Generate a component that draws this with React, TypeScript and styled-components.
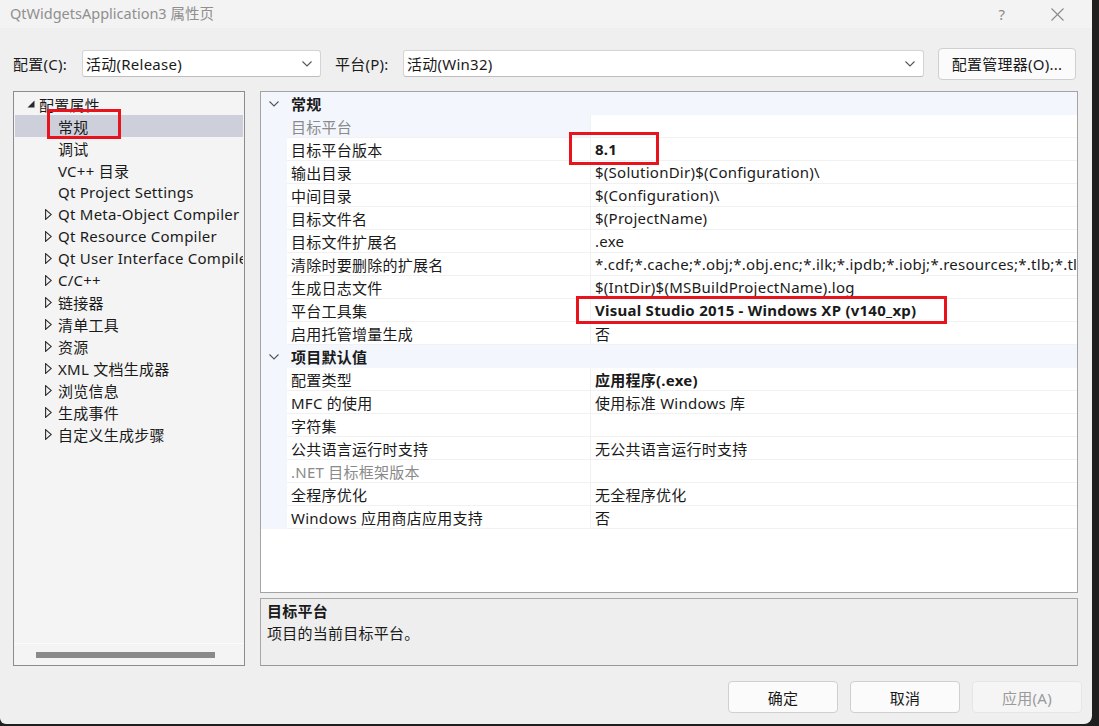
import React from "react";
import styled, { createGlobalStyle, css } from "styled-components";

const GlobalStyle = createGlobalStyle`
  html, body {
    margin: 0;
    padding: 0;
    background: #1f1f1f;
  }
  body {
    font-family: "Noto Sans", "Noto Sans CJK SC", sans-serif;
    font-size: 15px;
    letter-spacing: 0.25px;
    color: #1a1a1a;
  }
`;

const Window = styled.div`
  position: relative;
  width: 1092px;
  height: 724px;
  background: #efefef;
  border-bottom-right-radius: 8px;
  border-bottom-left-radius: 6px;
  display: flex;
  flex-direction: column;
  overflow: hidden;
`;

const TitleBar = styled.div`
  height: 28px;
  display: flex;
  align-items: center;
  padding-left: 10px;
  background: #f3f3f3;
`;

const Title = styled.div`
  flex: 1;
  color: #8f8f8f;
  font-size: 14.5px;
  letter-spacing: 0;
  padding-bottom: 4px;
`;

const TitleButton = styled.div<{ $w: number }>`
  width: ${({ $w }) => $w}px;
  height: 28px;
  display: flex;
  align-items: center;
  justify-content: center;
  color: #8a8a8a;
  font-size: 15px;
`;

const Toolbar = styled.div`
  display: flex;
  align-items: center;
  height: 31px;
  margin-top: 20px;
  padding-left: 13px;
`;

const Label = styled.span<{ $w: number }>`
  width: ${({ $w }) => $w}px;
  white-space: nowrap;
`;

const Select = styled.div<{ $w: number }>`
  width: ${({ $w }) => $w}px;
  height: 27px;
  box-sizing: border-box;
  background: #fff;
  border: 1px solid #d4d4d4;
  border-bottom-color: #bdbdbd;
  border-radius: 3px;
  display: flex;
  align-items: center;
  padding: 0 8px 0 3px;
  margin-right: 14px;
`;

const SelectText = styled.span`
  flex: 1;
`;

const PushButton = styled.button<{ $w: number; $disabled?: boolean }>`
  width: ${({ $w }) => $w}px;
  height: 32px;
  box-sizing: border-box;
  background: #fbfbfb;
  border: 1px solid #cfcfcf;
  border-radius: 4px;
  font-family: inherit;
  font-size: 15px;
  letter-spacing: 0.25px;
  color: #1a1a1a;
  padding: 0;
  ${({ $disabled }) =>
    $disabled &&
    css`
      background: #f5f5f5;
      border-color: #e6e6e6;
      color: #9a9a9a;
    `}
`;

const Main = styled.div`
  display: flex;
  gap: 15px;
  margin-top: 12px;
  padding-left: 13px;
  height: 575px;
`;

const TreePanel = styled.div`
  width: 232px;
  box-sizing: border-box;
  border: 1px solid #8c8c8c;
  background: #f4f4f4;
  display: flex;
  flex-direction: column;
`;

const TreeList = styled.div`
  flex: 1;
  padding-top: 1px;
  overflow: hidden;
`;

const TreeRow = styled.div<{ $selected?: boolean }>`
  height: 22px;
  display: flex;
  align-items: center;
  white-space: nowrap;
  overflow: hidden;
  margin: 0 1px;
  background: ${({ $selected }) => ($selected ? "#cdcfdb" : "transparent")};
`;

const Twisty = styled.span<{ $indent: number }>`
  flex: none;
  width: 14px;
  margin-left: ${({ $indent }) => $indent}px;
  display: flex;
  align-items: center;
  justify-content: center;
`;

const TreeLabel = styled.span<{ $top?: boolean }>`
  flex: none;
  margin-left: ${({ $top }) => ($top ? 1 : 3)}px;
`;

const HScroll = styled.div`
  height: 21px;
  border-top: 1px solid #fbfbfb;
  display: flex;
  align-items: center;
  padding-left: 22px;
`;

const HThumb = styled.div`
  width: 179px;
  height: 6px;
  background: #8a8a8a;
`;

const RightCol = styled.div`
  width: 818px;
  display: flex;
  flex-direction: column;
  gap: 5px;
`;

const Grid = styled.div`
  height: 502px;
  box-sizing: border-box;
  border: 1px solid #a3a3a3;
  background: #fff;
  overflow: hidden;
`;

const GridRow = styled.div<{ $header?: boolean }>`
  height: 23px;
  display: flex;
  white-space: nowrap;
  ${({ $header }) =>
    $header &&
    css`
      background: #f3f6fc;
      font-weight: 700;
    `}
`;

const Gutter = styled.div`
  width: 26px;
  flex: none;
  background: #f3f6fc;
  display: flex;
  align-items: center;
  justify-content: center;
`;

const NameCell = styled.div<{ $dim?: boolean; $current?: boolean }>`
  width: 303px;
  flex: none;
  box-sizing: border-box;
  padding-left: 4px;
  display: flex;
  align-items: center;
  border-bottom: 1px solid #f1f1f1;
  color: ${({ $dim }) => ($dim ? "#8a8a8a" : "#1a1a1a")};
  background: ${({ $current }) => ($current ? "#f3f6fc" : "#fff")};
`;

const ValueCell = styled.div<{ $bold?: boolean }>`
  flex: 1;
  min-width: 0;
  box-sizing: border-box;
  padding-left: 4px;
  display: flex;
  align-items: center;
  overflow: hidden;
  border-left: 1px solid #f1f1f1;
  border-bottom: 1px solid #f1f1f1;
  font-weight: ${({ $bold }) => ($bold ? 700 : 400)};
`;

const HeaderText = styled.div`
  padding-left: 4px;
  display: flex;
  align-items: center;
`;

const Description = styled.div`
  height: 68px;
  box-sizing: border-box;
  border: 1px solid #a8a8a8;
  border-bottom-color: #9a9a9a;
  background: #eeeeee;
  padding: 1px 6px;
  display: flex;
  flex-direction: column;
`;

const DescTitle = styled.div`
  font-weight: 700;
  height: 22px;
  line-height: 22px;
`;

const DescText = styled.div`
  height: 22px;
  line-height: 22px;
`;

const Footer = styled.div`
  display: flex;
  justify-content: flex-end;
  gap: 12px;
  padding-right: 10px;
  margin-top: 15px;
`;

const Annotation = styled.div<{ $x: number; $y: number; $w: number; $h: number }>`
  position: absolute;
  left: ${({ $x }) => $x}px;
  top: ${({ $y }) => $y}px;
  width: ${({ $w }) => $w}px;
  height: ${({ $h }) => $h}px;
  box-sizing: border-box;
  border: 3px solid #e8131d;
  pointer-events: none;
`;

const Chevron = () => (
  <svg width="10" height="6" viewBox="0 0 10 6">
    <path d="M0.5 0.5 L5 5 L9.5 0.5" fill="none" stroke="#555" strokeWidth="1.1" />
  </svg>
);

const ExpandedTri = () => (
  <svg width="8" height="8" viewBox="0 0 8 8">
    <polygon points="7.5,0.5 7.5,7.5 0.5,7.5" fill="#2a2a2a" />
  </svg>
);

const CollapsedTri = () => (
  <svg width="7" height="11" viewBox="0 0 7 11">
    <polygon points="0.6,0.6 6.3,5.5 0.6,10.4" fill="none" stroke="#2a2a2a" strokeWidth="1.1" />
  </svg>
);

type TreeItem = { label: string; level: 0 | 1; expandable?: boolean; expanded?: boolean; selected?: boolean };

const treeItems: TreeItem[] = [
  { label: "配置属性", level: 0, expandable: true, expanded: true },
  { label: "常规", level: 1, selected: true },
  { label: "调试", level: 1 },
  { label: "VC++ 目录", level: 1 },
  { label: "Qt Project Settings", level: 1 },
  { label: "Qt Meta-Object Compiler", level: 1, expandable: true },
  { label: "Qt Resource Compiler", level: 1, expandable: true },
  { label: "Qt User Interface Compiler", level: 1, expandable: true },
  { label: "C/C++", level: 1, expandable: true },
  { label: "链接器", level: 1, expandable: true },
  { label: "清单工具", level: 1, expandable: true },
  { label: "资源", level: 1, expandable: true },
  { label: "XML 文档生成器", level: 1, expandable: true },
  { label: "浏览信息", level: 1, expandable: true },
  { label: "生成事件", level: 1, expandable: true },
  { label: "自定义生成步骤", level: 1, expandable: true },
];

type Prop = { name: string; value?: string; bold?: boolean; dim?: boolean; current?: boolean };
type Section = { title: string; props: Prop[] };

const sections: Section[] = [
  {
    title: "常规",
    props: [
      { name: "目标平台", dim: true, current: true },
      { name: "目标平台版本", value: "8.1", bold: true },
      { name: "输出目录", value: "$(SolutionDir)$(Configuration)\\" },
      { name: "中间目录", value: "$(Configuration)\\" },
      { name: "目标文件名", value: "$(ProjectName)" },
      { name: "目标文件扩展名", value: ".exe" },
      {
        name: "清除时要删除的扩展名",
        value: "*.cdf;*.cache;*.obj;*.obj.enc;*.ilk;*.ipdb;*.iobj;*.resources;*.tlb;*.tli;*.tlh;*.tmp;*.rsp",
      },
      { name: "生成日志文件", value: "$(IntDir)$(MSBuildProjectName).log" },
      { name: "平台工具集", value: "Visual Studio 2015 - Windows XP (v140_xp)", bold: true },
      { name: "启用托管增量生成", value: "否" },
    ],
  },
  {
    title: "项目默认值",
    props: [
      { name: "配置类型", value: "应用程序(.exe)", bold: true },
      { name: "MFC 的使用", value: "使用标准 Windows 库" },
      { name: "字符集" },
      { name: "公共语言运行时支持", value: "无公共语言运行时支持" },
      { name: ".NET 目标框架版本", dim: true },
      { name: "全程序优化", value: "无全程序优化" },
      { name: "Windows 应用商店应用支持", value: "否" },
    ],
  },
];

export default function App() {
  return (
    <>
      <GlobalStyle />
      <Window>
        <TitleBar>
          <Title>QtWidgetsApplication3 属性页</Title>
          <TitleButton $w={40}>?</TitleButton>
          <TitleButton $w={70}>
            <svg width="13" height="13" viewBox="0 0 13 13">
              <path d="M0.5 0.5 L12.5 12.5 M12.5 0.5 L0.5 12.5" stroke="#8a8a8a" strokeWidth="1.1" />
            </svg>
          </TitleButton>
        </TitleBar>

        <Toolbar>
          <Label $w={69}>配置(C):</Label>
          <Select $w={239}>
            <SelectText>活动(Release)</SelectText>
            <Chevron />
          </Select>
          <Label $w={68}>平台(P):</Label>
          <Select $w={521}>
            <SelectText>活动(Win32)</SelectText>
            <Chevron />
          </Select>
          <PushButton $w={138}>配置管理器(O)...</PushButton>
        </Toolbar>

        <Main>
          <TreePanel>
            <TreeList>
              {treeItems.map((item) => (
                <TreeRow key={item.label} $selected={item.selected}>
                  <Twisty $indent={item.level === 0 ? 9 : 26}>
                    {item.expandable && (item.expanded ? <ExpandedTri /> : <CollapsedTri />)}
                  </Twisty>
                  <TreeLabel $top={item.level === 0}>{item.label}</TreeLabel>
                </TreeRow>
              ))}
            </TreeList>
            <HScroll>
              <HThumb />
            </HScroll>
          </TreePanel>

          <RightCol>
            <Grid>
              {sections.map((section) => (
                <React.Fragment key={section.title}>
                  <GridRow $header>
                    <Gutter>
                      <Chevron />
                    </Gutter>
                    <HeaderText>{section.title}</HeaderText>
                  </GridRow>
                  {section.props.map((p) => (
                    <GridRow key={p.name}>
                      <Gutter />
                      <NameCell $dim={p.dim} $current={p.current}>
                        {p.name}
                      </NameCell>
                      <ValueCell $bold={p.bold}>{p.value}</ValueCell>
                    </GridRow>
                  ))}
                </React.Fragment>
              ))}
            </Grid>
            <Description>
              <DescTitle>目标平台</DescTitle>
              <DescText>项目的当前目标平台。</DescText>
            </Description>
          </RightCol>
        </Main>

        <Footer>
          <PushButton $w={110}>确定</PushButton>
          <PushButton $w={110}>取消</PushButton>
          <PushButton $w={110} $disabled>
            应用(A)
          </PushButton>
        </Footer>

        <Annotation $x={47} $y={109} $w={74} $h={30} />
        <Annotation $x={569} $y={132} $w={90} $h={33} />
        <Annotation $x={576} $y={296} $w={371} $h={28} />
      </Window>
    </>
  );
}
